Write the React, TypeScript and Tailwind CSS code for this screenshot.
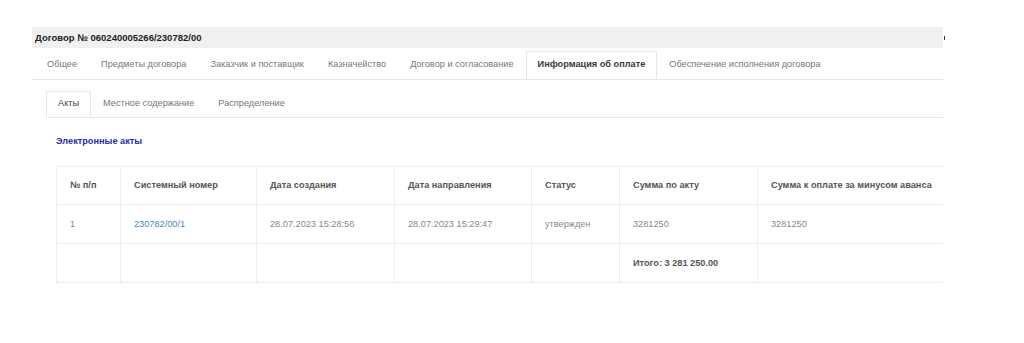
import React from 'react';

const mainTabs = [
  'Общее',
  'Предметы договора',
  'Заказчик и поставщик',
  'Казначейство',
  'Договор и согласование',
  'Информация об оплате',
  'Обеспечение исполнения договора',
];

const subTabs = ['Акты', 'Местное содержание', 'Распределение'];

const columns = [
  { title: '№ п/п', w: 'w-[64px]' },
  { title: 'Системный номер', w: 'w-[136px]' },
  { title: 'Дата создания', w: 'w-[138px]' },
  { title: 'Дата направления', w: 'w-[137px]' },
  { title: 'Статус', w: 'w-[88px]' },
  { title: 'Сумма по акту', w: 'w-[138px]' },
  { title: 'Сумма к оплате за минусом аванса', w: 'w-[220px]' },
];

const Tab = ({ label, active, h, bold }: { label: string; active?: boolean; h: string; bold?: boolean }) => (
  <li
    className={
      active
        ? `px-[11px] ${h} flex items-center bg-white border border-[#e6e6e6] border-b-white -mb-px ${bold ? 'font-bold text-[#3a3a3a]' : 'text-[#444]'}`
        : `px-3 ${h} flex items-center text-[#777]`
    }
  >
    {label}
  </li>
);

export default function App() {
  return (
    <div className="min-h-[343px] bg-white text-[9.2px] leading-none font-['Liberation_Sans',Arial,sans-serif]">
      <div className="flex items-start pt-[27px] pl-[32px]">
        <div className="w-[911px] overflow-hidden">
          {/* Header bar */}
          <div className="h-[21px] bg-[#f0f0f0] flex items-center pl-[3px] text-[9.5px] font-bold text-[#222]">
            Договор № 060240005266/230782/00
          </div>

          {/* Main tabs */}
          <ul className="flex mt-[3px] pl-[3px] border-b border-[#e6e6e6]">
            {mainTabs.map((t) => (
              <Tab key={t} label={t} h="h-[28px]" bold active={t === 'Информация об оплате'} />
            ))}
          </ul>

          <div className="pl-[14px]">
            {/* Sub tabs */}
            <ul className="flex mt-[11px] border-b border-[#e6e6e6]">
              {subTabs.map((t) => (
                <Tab key={t} label={t} h="h-[26px]" active={t === 'Акты'} />
              ))}
            </ul>

            <div className="pl-[10px]">
              <div className="mt-[19px] font-bold text-[#2530a8]">Электронные акты</div>

              <table className="mt-[20px] table-fixed border-collapse w-[921px] text-left">
                <colgroup>
                  {columns.map((c) => (
                    <col key={c.title} className={c.w} />
                  ))}
                </colgroup>
                <thead>
                  <tr className="h-[38px]">
                    {columns.map((c) => (
                      <th key={c.title} className="border border-[#ededed] pl-[13px] font-bold text-[#555] whitespace-nowrap">
                        {c.title}
                      </th>
                    ))}
                  </tr>
                </thead>
                <tbody className="text-[#888]">
                  <tr className="h-[39px]">
                    <td className="border border-[#ededed] pl-[13px]">1</td>
                    <td className="border border-[#ededed] pl-[13px] text-[#4f84bd]">230782/00/1</td>
                    <td className="border border-[#ededed] pl-[13px]">28.07.2023 15:28:56</td>
                    <td className="border border-[#ededed] pl-[13px]">28.07.2023 15:29:47</td>
                    <td className="border border-[#ededed] pl-[13px]">утвержден</td>
                    <td className="border border-[#ededed] pl-[13px]">3281250</td>
                    <td className="border border-[#ededed] pl-[13px]">3281250</td>
                  </tr>
                  <tr className="h-[39px]">
                    <td className="border border-[#ededed]"></td>
                    <td className="border border-[#ededed]"></td>
                    <td className="border border-[#ededed]"></td>
                    <td className="border border-[#ededed]"></td>
                    <td className="border border-[#ededed]"></td>
                    <td className="border border-[#ededed] pl-[13px] font-bold text-[#555]">Итого: 3 281 250.00</td>
                    <td className="border border-[#ededed]"></td>
                  </tr>
                </tbody>
              </table>
            </div>
          </div>
        </div>
        <div className="pt-[9px] pl-px">
          <div className="w-px h-[4px] bg-[#333]"></div>
        </div>
      </div>
    </div>
  );
}
